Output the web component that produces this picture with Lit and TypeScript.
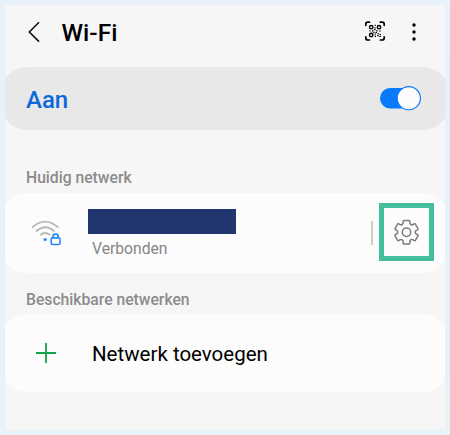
import { LitElement, html, css, svg } from "lit";
import { customElement } from "lit/decorators.js";

const gearPath = (() => {
  const pts: string[] = [];
  const at = (r: number, deg: number) => {
    const a = (deg * Math.PI) / 180;
    return `${(12.5 + r * Math.sin(a)).toFixed(2)} ${(13.2 - r * Math.cos(a)).toFixed(2)}`;
  };
  for (let k = 0; k < 6; k++) {
    const b = k * 60;
    pts.push(`${k ? "L" : "M"}${at(9.7, b - 20)}`);
    pts.push(`L${at(11.1, b - 18)} Q${at(12.3, b - 16)} ${at(12, b - 11)}`);
    pts.push(`L${at(12, b + 11)} Q${at(12.3, b + 16)} ${at(11.1, b + 18)}`);
    pts.push(`L${at(9.7, b + 20)} C${at(8.7, b + 25)} ${at(8.7, b + 35)} ${at(9.7, b + 40)}`);
  }
  return pts.join(" ") + "Z";
})();

@customElement("app-root")
export class AppRoot extends LitElement {
  static styles = css`
    :host {
      display: block;
      box-sizing: border-box;
      width: 450px;
      height: 435px;
      padding: 5px;
      background: linear-gradient(#e9f1fb, #e8f2f7);
      font-family: Roboto, "Liberation Sans", sans-serif;
      color: #000;
    }
    svg { display: block; flex: none; }
    .panel {
      height: 425px;
      overflow: hidden;
      background: #f6f6f6;
      display: flex;
      flex-direction: column;
    }
    .header { height: 62px; display: flex; align-items: center; box-sizing: border-box; padding: 0 28px 8px 22px; }
    .title { margin: 2px auto 0 16.5px; font-size: 24.5px; font-weight: 500; line-height: 30px; }
    .more { margin-left: 25px; }
    .scan { margin-bottom: 2px; }
    .card { margin: 0 -4px; border-radius: 26px; background: #fcfcfc; display: flex; align-items: center; flex: none; box-sizing: border-box; }
    .main { height: 63px; background: #e8e8e8; padding: 0 27px 0 25px; justify-content: space-between; }
    .on { font-size: 24px; font-weight: 500; color: #0b68dc; line-height: 30px; padding-top: 2px; }
    .label { font-size: 15.7px; font-weight: 500; color: #8b8b8b; padding-left: 21px; line-height: 20px; flex: none; }
    .current { margin-top: 38px; height: 25px; }
    .available { margin-top: 17px; height: 24px; }
    .network { height: 80px; padding: 0 15px 0 30px; }
    .info { margin: 0 auto 0 27px; }
    .name { width: 148px; height: 25px; background: #21366f; }
    .status { font-size: 15.7px; line-height: 19px; color: #868686; padding: 5px 0 0 4px; }
    .divider { width: 2px; height: 24px; background: #cdcdcd; margin-right: 6px; }
    .settings { width: 55px; height: 58px; box-sizing: border-box; border: 5px solid #43bf9b; display: grid; place-items: center; margin-bottom: 2px; }
    .add { height: 78px; padding-left: 34px; }
    .addtext { font-size: 20.5px; line-height: 26px; margin-left: 35px; padding-top: 1px; }
  `;

  private finder(x: number, y: number) {
    return svg`<circle cx=${x} cy=${y} r="1.7" fill="none" stroke="#000" stroke-width="1.4"/>`;
  }

  render() {
    return html`
      <div class="panel">
        <div class="header">
          <svg width="18" height="22" viewBox="0 0 18 22" fill="none" stroke="#111" stroke-width="1.6">
            <path d="M12 1.2L2.3 11L12 20.6" />
          </svg>
          <div class="title">Wi-Fi</div>
          <svg class="scan" width="22" height="22" viewBox="0 0 22 22" fill="none" stroke="#000" stroke-width="1.7" stroke-linecap="round">
            <path d="M1.8 5.3V4.2Q1.8 2.2 3.8 2.2H5.5M16.3 2.2H18.2Q20.2 2.2 20.2 4.2V5.3M20.2 16.9V18Q20.2 20 18.2 20H16.3M5.5 20H3.8Q1.8 20 1.8 18V16.9" />
            ${this.finder(7.2, 7.2)}${this.finder(15, 7.2)}${this.finder(7.2, 15)}
            <path stroke-width="1.15" stroke-linecap="butt" d="M10.6 5.3h1.2M10.4 7.9h1.3M5.4 11h1.3M8 10.9h1.4M10 9.6h1.5M12.2 10.9h1.5M15.2 11h1.5M9.2 12.4h1.3M11.5 12.5h1.5M10.6 14.1h1.3M10.6 16.3h1.4M13.3 13.7h1.8M13.2 15.6h1.4M15.5 14.6h1.4M15.2 16.5h1.7" />
          </svg>
          <svg class="more" width="6" height="20" viewBox="0 0 6 20" fill="#000">
            <circle cx="3" cy="3" r="1.7" /><circle cx="3" cy="10" r="1.7" /><circle cx="3" cy="17" r="1.7" />
          </svg>
        </div>
        <div class="card main">
          <div class="on">Aan</div>
          <svg width="42" height="25" viewBox="0 0 42 25">
            <rect x="0" y="2" width="38" height="20.4" rx="10.2" fill="#087bfa" />
            <circle cx="28.8" cy="12.2" r="11.6" fill="#fcfcfc" stroke="#087bfa" stroke-width="1.1" />
          </svg>
        </div>
        <div class="label current">Huidig netwerk</div>
        <div class="card network">
          <svg width="30" height="26" viewBox="0 0 30 26" fill="none" stroke="#b9b9b9" stroke-width="1.8">
            <path d="M1 7.6Q14 -4.4 27.4 7.6M5 11.5Q14.2 2.9 23.4 11.5M9.2 15.2Q14.2 10.8 19 15.2" />
            <circle cx="14.2" cy="19.5" r="1.6" fill="#2688f4" stroke="none" />
            <g stroke="#2688f4" stroke-width="1.6"><rect x="20.2" y="17.9" width="8.8" height="6.6" rx="1.3" /><path d="M22 17.8V16.6Q22 14.1 24.6 14.1T27.2 16.6V17.8" /></g>
          </svg>
          <div class="info">
            <div class="name"></div>
            <div class="status">Verbonden</div>
          </div>
          <div class="divider"></div>
          <div class="settings">
            <svg width="26" height="26" viewBox="0 0 26 26" fill="none" stroke="#7c7c7c" stroke-width="1.5" stroke-linejoin="round">
              <path d=${gearPath} /><circle cx="12.5" cy="13.2" r="4.2" />
            </svg>
          </div>
        </div>
        <div class="label available">Beschikbare netwerken</div>
        <div class="card add">
          <svg width="22" height="22" viewBox="0 0 22 22" stroke="#14a54a" stroke-width="1.8">
            <path d="M11 1V21M1 11H21" />
          </svg>
          <div class="addtext">Netwerk toevoegen</div>
        </div>
      </div>
    `;
  }
}
